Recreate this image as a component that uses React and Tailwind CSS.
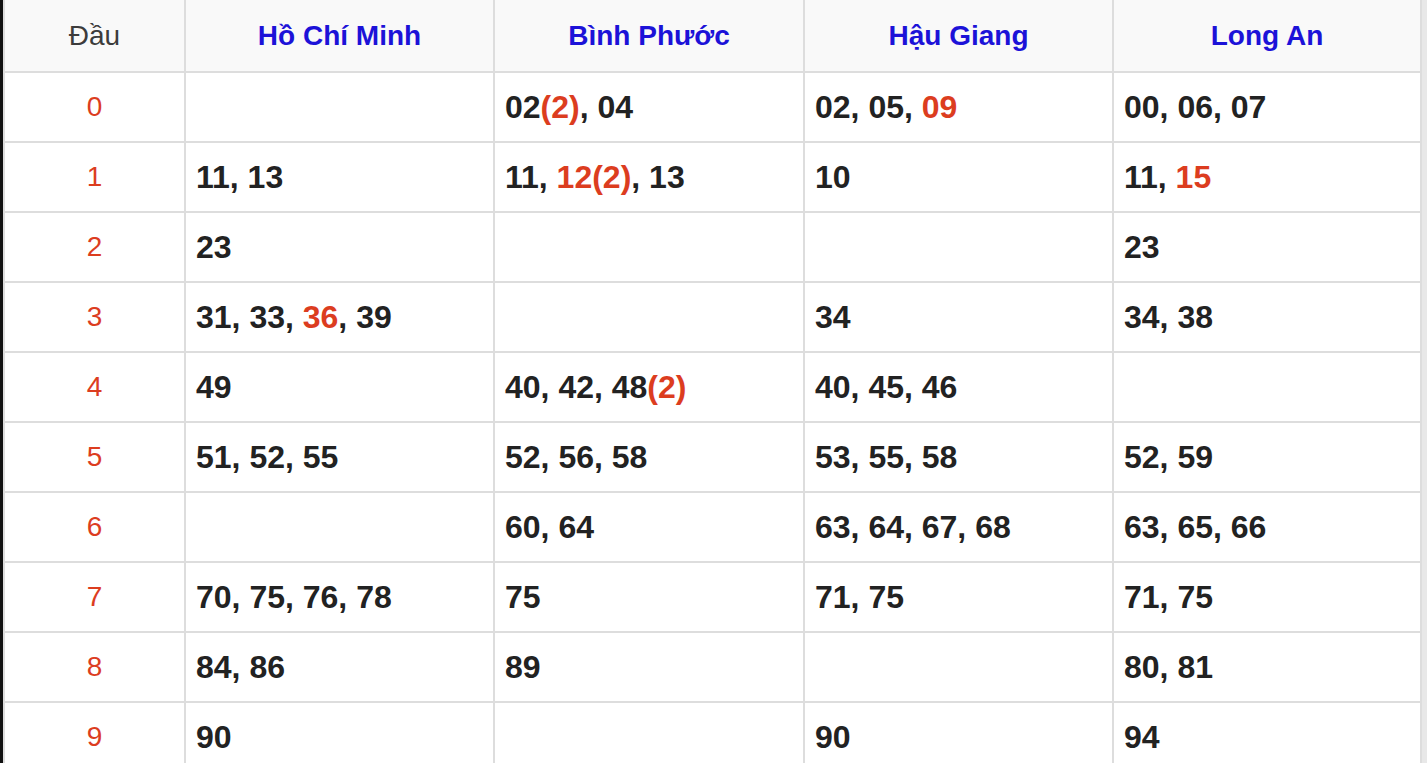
const headers = ['Hồ Chí Minh', 'Bình Phước', 'Hậu Giang', 'Long An']

// [..] marks the part drawn in red
const rows = [
  ['', '02[(2)], 04', '02, 05, [09]', '00, 06, 07'],
  ['11, 13', '11, [12(2)], 13', '10', '11, [15]'],
  ['23', '', '', '23'],
  ['31, 33, [36], 39', '', '34', '34, 38'],
  ['49', '40, 42, 48[(2)]', '40, 45, 46', ''],
  ['51, 52, 55', '52, 56, 58', '53, 55, 58', '52, 59'],
  ['', '60, 64', '63, 64, 67, 68', '63, 65, 66'],
  ['70, 75, 76, 78', '75', '71, 75', '71, 75'],
  ['84, 86', '89', '', '80, 81'],
  ['90', '', '90', '94'],
]

const Numbers = ({ text }) => {
  const parts = text.split(/(\[[^\]]*\])/).filter(Boolean)
  return (
    <span className="whitespace-pre">
      {parts.map((p, i) =>
        p.startsWith('[') ? (
          <span key={i} className="text-[#dc3d1f]">{p.slice(1, -1)}</span>
        ) : (
          p
        )
      )}
    </span>
  )
}

export default function App() {
  return (
    <div className="flex h-[763px] w-[1427px] overflow-hidden bg-white font-['Liberation_Sans',Arial,sans-serif]">
      <div className="w-[3px] shrink-0 bg-[#111]" />
      <div className="grid shrink-0 grid-cols-[179px_307px_308px_307px_306px] grid-rows-[71px_repeat(10,68px)] gap-[2px] self-start border-x-2 border-b-2 border-[#dddddd] bg-[#dddddd]">
        <div className="flex items-center justify-center bg-[#f9f9f9] text-[28px] text-[#3c3c3c]">Đầu</div>
        {headers.map((h) => (
          <div key={h} className="flex items-center justify-center bg-[#f9f9f9] text-[28px] font-bold text-[#1c12d8]">
            {h}
          </div>
        ))}
        {rows.map((row, i) => (
          <div key={i} className="contents">
            <div className="flex items-center justify-center bg-white text-[28px] text-[#dc3d1f]">{i}</div>
            {row.map((cell, j) => (
              <div key={j} className="flex items-center bg-white pl-[10px] text-[32px] font-bold text-[#222]">
                <Numbers text={cell} />
              </div>
            ))}
          </div>
        ))}
      </div>
      <div className="flex-1 bg-[#e8e8e8]" />
    </div>
  )
}
